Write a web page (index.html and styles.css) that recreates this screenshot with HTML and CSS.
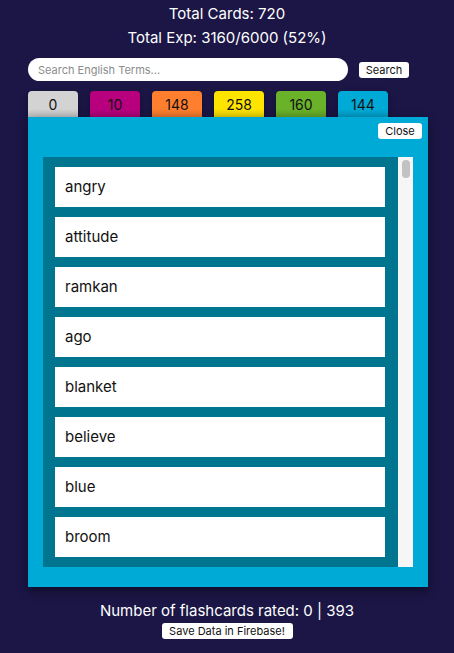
FILE: index.html
```html
<!DOCTYPE html>
<html>
<head>
<meta charset="utf-8">
<link rel="stylesheet" href="styles.css">
</head>
<body>
<div class="stats">
  <div class="stat stat-cards">Total Cards: 720</div>
  <div class="stat stat-exp">Total Exp: 3160/6000 (52%)</div>
</div>
<div class="search-row">
  <input class="search-input" type="text" placeholder="Search English Terms...">
  <button class="btn search-btn">Search</button>
</div>
<div class="tabs">
  <div class="tab tab-gray">0</div>
  <div class="tab tab-magenta">10</div>
  <div class="tab tab-orange">148</div>
  <div class="tab tab-yellow">258</div>
  <div class="tab tab-green">160</div>
  <div class="tab tab-blue">144</div>
</div>
<div class="panel">
  <div class="close-row"><button class="btn close-btn">Close</button></div>
  <div class="list-wrap">
    <div class="list">
      <div class="item">angry</div>
      <div class="item">attitude</div>
      <div class="item">ramkan</div>
      <div class="item">ago</div>
      <div class="item">blanket</div>
      <div class="item">believe</div>
      <div class="item">blue</div>
      <div class="item">broom</div>
    </div>
    <div class="scrollbar"><div class="thumb"></div></div>
  </div>
</div>
<div class="footer">
  <div class="rated">Number of flashcards rated: 0 | 393</div>
  <button class="btn save-btn">Save Data in Firebase!</button>
</div>
</body>
</html>
```
FILE: styles.css
```css
html, body {
  margin: 0;
  padding: 0;
}
body {
  background: #1b1646;
  color: #ffffff;
  font-family: Inter, "Noto Sans", sans-serif;
  width: 454px;
  height: 653px;
  overflow: hidden;
}
.stats {
  padding-top: 2px;
  text-align: center;
}
.stat {
  font-size: 15px;
  line-height: 24px;
}
.search-row {
  display: flex;
  align-items: center;
  margin: 8px 0 0 28px;
}
.search-input {
  box-sizing: border-box;
  width: 320px;
  height: 23px;
  border: none;
  border-radius: 12px;
  padding: 0 10px;
  font-family: Inter, sans-serif;
  font-size: 11px;
  color: #333;
  background: #fff;
  outline: none;
}
.search-input::placeholder {
  color: #8c8c8c;
}
.btn {
  box-sizing: border-box;
  background: #fff;
  border: none;
  border-radius: 3px;
  color: #111;
  font-family: Inter, sans-serif;
  font-size: 11px;
  padding: 0;
  height: 16px;
  line-height: 16px;
}
.search-btn {
  margin-left: 11px;
  width: 50px;
}
.tabs {
  display: flex;
  gap: 12px;
  margin: 10px 0 0 28px;
}
.tab {
  width: 50px;
  height: 26px;
  border-radius: 4px 4px 0 0;
  color: #111;
  font-size: 14px;
  line-height: 28px;
  text-align: center;
  box-shadow: 0 2px 6px rgba(0,0,0,0.35);
  background-image: linear-gradient(to bottom, rgba(0,0,0,0) 70%, rgba(0,0,0,0.12) 100%);
}
.tab-gray { background-color: #d3d3d3; }
.tab-magenta { background-color: #b8007f; }
.tab-orange { background-color: #ff7f2e; }
.tab-yellow { background-color: #ffe400; }
.tab-green { background-color: #6ab22a; }
.tab-blue { background-color: #00aad7; }
.panel {
  position: relative;
  width: 400px;
  height: 470px;
  margin-left: 28px;
  background: #00aad7;
  box-shadow: 0 4px 10px rgba(0,0,0,0.45);
  display: flex;
  flex-direction: column;
}
.close-row {
  display: flex;
  justify-content: flex-end;
  padding: 6px 6px 0 0;
}
.close-btn {
  width: 44px;
  height: 16px;
  border-radius: 3px;
}
.list-wrap {
  display: flex;
  margin: 18px 15px 0 15px;
  height: 410px;
}
.list {
  box-sizing: border-box;
  width: 355px;
  height: 410px;
  background: #007590;
  padding: 10px 13px 0 12px;
  overflow: hidden;
  display: flex;
  flex-direction: column;
  gap: 10px;
}
.item {
  flex: 0 0 40px;
  background: #fff;
  color: #111;
  font-size: 15px;
  line-height: 40px;
  padding-left: 10px;
}
.scrollbar {
  width: 15px;
  background: #f6f6f6;
  display: flex;
  justify-content: center;
}
.thumb {
  width: 8px;
  height: 18px;
  margin-top: 3px;
  margin-left: 1px;
  border-radius: 4px;
  background: #c2c2c2;
}
.footer {
  text-align: center;
  margin-top: 14px;
}
.rated {
  font-size: 15px;
  line-height: 20px;
}
.save-btn {
  display: block;
  margin: 2px auto 0;
  width: 131px;
}
```
